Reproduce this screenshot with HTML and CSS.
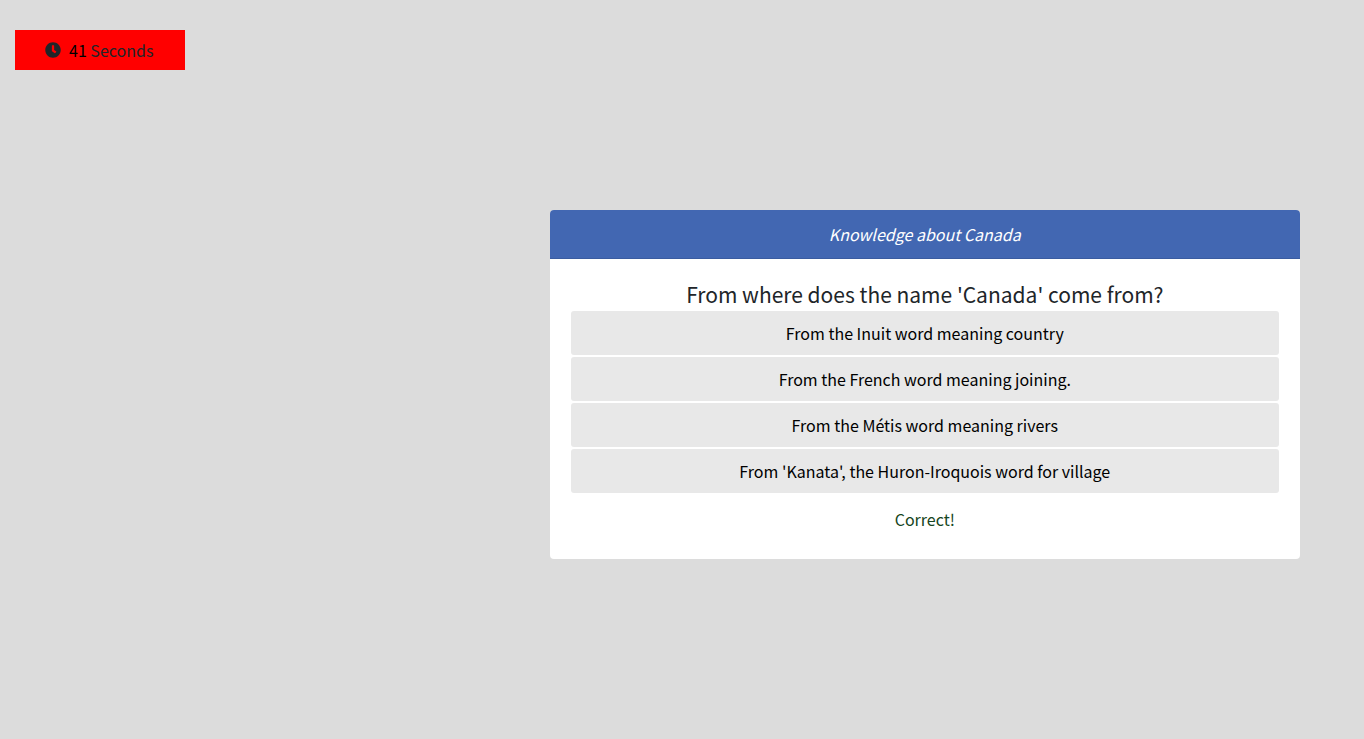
FILE: index.html
```html
<!DOCTYPE html>
<html lang="en">
<head>
<meta charset="utf-8">
<meta name="viewport" content="width=device-width, initial-scale=1">
<title>Knowledge about Canada</title>
<link rel="stylesheet" href="styles.css">
</head>
<body>
<div class="timer" role="timer">
  <svg class="timer-icon" viewBox="0 0 512 512" aria-hidden="true"><path fill="currentColor" d="M256 8C119 8 8 119 8 256s111 248 248 248 248-111 248-248S393 8 256 8zm57.100 350.100L224.900 294c-3.100-2.300-4.900-5.900-4.900-9.700V116c0-6.600 5.400-12 12-12h48c6.600 0 12 5.400 12 12v137.700l63.500 46.200c5.400 3.900 6.500 11.400 2.600 16.800l-28.200 38.800c-3.900 5.300-11.400 6.500-16.800 2.600z"/></svg>
  <span><span class="timer-value">41</span> Seconds</span>
</div>
<main class="card">
  <h1 class="card-header">Knowledge about Canada</h1>
  <div class="card-body">
    <h2 class="question">From where does the name 'Canada' come from?</h2>
    <div class="answers">
      <button class="answer" type="button">From the Inuit word meaning country</button>
      <button class="answer" type="button">From the French word meaning joining.</button>
      <button class="answer" type="button">From the Métis word meaning rivers</button>
      <button class="answer" type="button">From 'Kanata', the Huron-Iroquois word for village</button>
    </div>
    <p class="feedback" role="status">Correct!</p>
  </div>
</main>
</body>
</html>
```
FILE: styles.css
```css
* {
  box-sizing: border-box;
}

body {
  margin: 0;
  padding: 30px 64px 30px 15px;
  background: #dcdcdc;
  color: #212529;
  font-family: "Noto Sans CJK JP", "Noto Sans", sans-serif;
  font-size: 16px;
  line-height: 24px;
}

.timer {
  display: flex;
  align-items: center;
  gap: 8px;
  width: 170px;
  padding: 8px 30px;
  background: #ff0000;
  white-space: nowrap;
}

.timer-icon {
  flex: none;
  width: 16px;
  height: 16px;
}

.timer-value {
  color: #000000;
}

.card {
  width: 58.400%;
  min-width: 320px;
  margin: 140px 0 0 auto;
  border-radius: 4px;
  background: #ffffff;
  text-align: center;
  overflow: hidden;
}

.card-header {
  margin: 0;
  padding: 12px 20px;
  border-bottom: 1px solid #3a5ca0;
  background: #4267b2;
  color: #ffffff;
  font-size: 16px;
  font-style: italic;
  font-weight: 400;
}

.card-body {
  padding: 20px 21px 28px;
}

.question {
  margin: 0 0 2px;
  font-size: 21px;
  font-weight: 400;
  line-height: 30px;
}

.answers {
  display: grid;
  gap: 2px;
}

.answer {
  width: 100%;
  padding: 10px 20px;
  border: 0;
  border-radius: 3px;
  background: #e8e8e8;
  color: #000000;
  font: inherit;
  cursor: pointer;
}

.feedback {
  margin: 14px 0 0;
  color: #164522;
}
```
